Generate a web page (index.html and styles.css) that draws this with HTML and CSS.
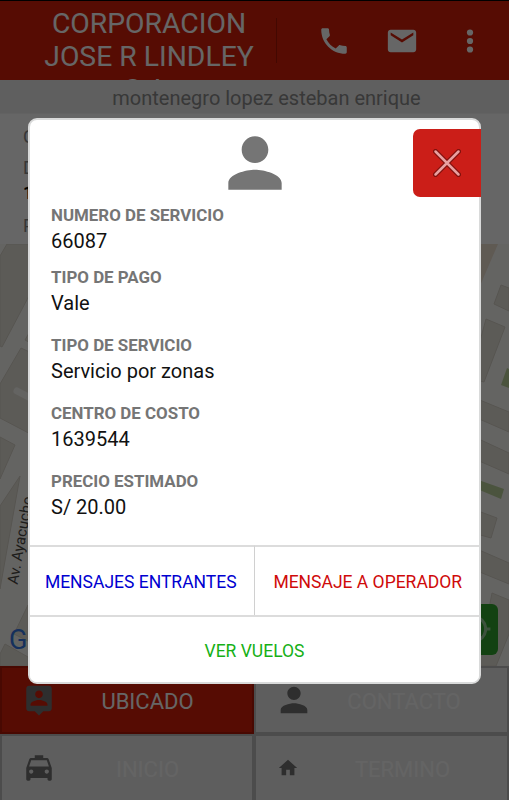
FILE: index.html
```html
<!DOCTYPE html>
<html lang="es">
  <head>
    <meta charset="UTF-8" />
    <meta name="viewport" content="width=device-width, initial-scale=1.0" />
    <title>Servicio</title>
    <link rel="stylesheet" href="styles.css">
  </head>
  <body>
    <div class="screen">
      <header class="header">
        <h1 class="title">CORPORACION<br />JOSE R LINDLEY<br />S.A.</h1>
        <nav class="actions">
          <svg width="34" height="34" viewBox="0 0 24 24"><path d="M6.62 10.79c1.44 2.83 3.76 5.14 6.59 6.59l2.2-2.2c.27-.27.67-.36 1.02-.24 1.12.37 2.33.57 3.57.57.55 0 1 .45 1 1V20c0 .55-.45 1-1 1C10.61 21 3 13.39 3 4c0-.55.45-1 1-1h3.5c.55 0 1 .45 1 1 0 1.25.2 2.45.57 3.57.11.35.03.74-.25 1.02z"/></svg>
          <svg width="34" height="34" viewBox="0 0 24 24"><path d="M20 4H4c-1.1 0-1.99.9-1.99 2L2 18c0 1.1.9 2 2 2h16c1.1 0 2-.9 2-2V6c0-1.1-.9-2-2-2zm0 4l-8 5-8-5V6l8 5 8-5z"/></svg>
          <svg width="34" height="34" viewBox="0 0 24 24"><circle cx="12" cy="6" r="2.2"/><circle cx="12" cy="12" r="2.2"/><circle cx="12" cy="18" r="2.2"/></svg>
        </nav>
      </header>
      <div class="passenger">montenegro lopez esteban enrique</div>
      <div class="info">
        <p class="info-label">C</p>
        <p class="info-label">D</p>
        <p class="info-value">1</p>
        <p class="info-label">P</p>
      </div>
      <div class="map">
        <svg class="map-tiles" width="509" height="422" viewBox="0 0 509 422">
          <g class="block">
            <path d="M0 12L7 0H40V31L2 103 0 102z"/>
            <path d="M25 96L40 70V104z"/>
            <path d="M0 140L21 104 40 113V195L0 174z"/>
            <path d="M0 193L15 201 0 235z"/>
            <path d="M0 262L20 232 0 345z"/>
            <path d="M14 390L28 361V397z"/>
            <path d="M0 410L5 400 28 413V422H0z"/>
            <path d="M501 41L494 60 509 67V44z"/>
            <path d="M486 75L505 83 484 138 470 134z"/>
            <path d="M470 152L509 168V188L470 171z"/>
            <path d="M470 191L509 209V230L470 213z"/>
            <path d="M470 264L497 274 491 294 470 288z"/>
            <path d="M470 302L509 319V340L470 324z"/>
            <path d="M492 349L509 356V390L496 422H478z"/>
          </g>
          <path class="sand" d="M470 0H498L470 65z"/>
          <path class="road" d="M40 159L17 147"/>
          <g class="park">
            <path d="M507 124L501 141 509 144V125z"/>
            <path d="M470 233L504 245 501 255 470 242z"/>
          </g>
          <text class="street" transform="translate(17.500 341) rotate(-80)">Av. Ayacucho</text>
          <text class="google" x="9" y="405">Google</text>
        </svg>
        <div class="locate">
          <svg width="38" height="38" viewBox="0 0 24 24"><path d="M20.940 11A8.990 8.990 0 0 0 13 3.060V1h-2v2.060A8.990 8.990 0 0 0 3.060 11H1v2h2.060A8.990 8.990 0 0 0 11 20.940V23h2v-2.060A8.990 8.990 0 0 0 20.940 13H23v-2zM12 19a7 7 0 1 1 0-14 7 7 0 0 1 0 14z"/></svg>
        </div>
      </div>
      <div class="tabs">
        <div class="tab active">
          <svg width="34" height="34" viewBox="0 0 24 24"><path d="M19 2H5c-1.110 0-2 .9-2 2v14c0 1.100.890 2 2 2h4l3 3 3-3h4c1.100 0 2-.9 2-2V4c0-1.100-.9-2-2-2zm-7 3.300c1.490 0 2.700 1.210 2.700 2.700s-1.210 2.700-2.700 2.700S9.300 9.490 9.300 8s1.210-2.700 2.700-2.700zM18 16H6v-.9c0-2 4-3.100 6-3.100s6 1.100 6 3.100z"/></svg>
          <span class="tab-text">UBICADO</span>
        </div>
        <div class="tab">
          <svg width="40" height="40" viewBox="0 0 24 24"><path d="M12 12c2.210 0 4-1.790 4-4s-1.790-4-4-4-4 1.790-4 4 1.790 4 4 4zm0 2c-2.670 0-8 1.340-8 4v2h16v-2c0-2.660-5.330-4-8-4z"/></svg>
          <span class="tab-text">CONTACTO</span>
        </div>
        <div class="tab">
          <svg width="34" height="34" viewBox="0 0 24 24"><path d="M18.920 6.010C18.720 5.420 18.160 5 17.500 5H15V3H9v2H6.500c-.66 0-1.210.42-1.420 1.010L3 12v8c0 .55.450 1 1 1h1c.55 0 1-.45 1-1v-1h12v1c0 .55.450 1 1 1h1c.55 0 1-.45 1-1v-8zM6.500 16c-.83 0-1.500-.67-1.500-1.500S5.670 13 6.500 13s1.500.67 1.500 1.500S7.330 16 6.500 16zm11 0c-.83 0-1.500-.67-1.500-1.500s.67-1.500 1.500-1.500 1.500.67 1.500 1.500-.67 1.500-1.500 1.500zM5 11l1.500-4.500h11L19 11z"/></svg>
          <span class="tab-text">INICIO</span>
        </div>
        <div class="tab">
          <svg class="home" width="22" height="22" viewBox="0 0 24 24"><path d="M10 20v-6h4v6h5v-8h3L12 3 2 12h3v8z"/></svg>
          <span class="tab-text">TERMINO</span>
        </div>
      </div>
    </div>

    <div class="overlay">
      <div class="modal">
        <button class="close">
          <svg width="28" height="28" viewBox="0 0 28 28"><path class="cross-edge" d="M2.500 2.500L25.500 25.500M25.500 2.500L2.500 25.500"/><path class="cross" d="M2.500 2.500L25.500 25.500M25.500 2.500L2.500 25.500"/></svg>
        </button>
        <div class="modal-body">
          <svg class="avatar" width="80" height="80" viewBox="0 0 24 24"><path d="M12 12c2.210 0 4-1.790 4-4s-1.790-4-4-4-4 1.790-4 4 1.790 4 4 4zm0 2c-2.670 0-8 1.340-8 4v2h16v-2c0-2.660-5.330-4-8-4z"/></svg>
          <dl class="details">
            <dt>NUMERO DE SERVICIO</dt>
            <dd class="tight">66087</dd>
            <dt>TIPO DE PAGO</dt>
            <dd>Vale</dd>
            <dt>TIPO DE SERVICIO</dt>
            <dd>Servicio por zonas</dd>
            <dt>CENTRO DE COSTO</dt>
            <dd>1639544</dd>
            <dt>PRECIO ESTIMADO</dt>
            <dd>S/ 20.00</dd>
          </dl>
        </div>
        <div class="buttons">
          <button class="button blue">MENSAJES ENTRANTES</button>
          <button class="button red">MENSAJE A OPERADOR</button>
          <button class="button green">VER VUELOS</button>
        </div>
      </div>
    </div>
  </body>
</html>
```

FILE: styles.css
```css
* {
  box-sizing: border-box;
}

body {
  font-family: Roboto, "Liberation Sans", sans-serif;
  margin: 0;
  height: 800px;
  overflow: hidden;
}

svg {
  display: block;
  flex-shrink: 0;
}

.screen {
  display: flex;
  flex-direction: column;
  height: 800px;
  background-color: #fff;
}

.header {
  display: flex;
  height: 80px;
  border-top: 1px solid #000;
  background-color: #d81e08;
  overflow: hidden;
}

.title {
  width: 254px;
  margin: 7.2px 0 0 22px;
  color: #fff;
  font-size: 28.3px;
  font-weight: 400;
  line-height: 32.7px;
  text-align: center;
}

.actions {
  display: flex;
  height: 45px;
  margin-top: 17px;
  padding-left: 40px;
  gap: 34px;
  align-items: center;
  border-left: 1px solid #a81404;
  fill: #fff;
}

.passenger {
  height: 33px;
  padding-left: 24px;
  background-color: #eee;
  color: #8c8c8c;
  font-size: 20px;
  line-height: 36px;
  text-align: center;
}

.info {
  height: 131px;
  padding: 13px 23px 0;
  border-top: 1px solid #f4f4f4;
  font-size: 18px;
}

.info p {
  margin: 0;
}

.info-label {
  height: 31px;
  line-height: 20px;
  color: #888;
}

.info-value {
  height: 27px;
  line-height: 8px;
  font-weight: 700;
}

.map {
  position: relative;
  height: 422px;
  background-color: #faf9f6;
  overflow: hidden;
}

.block {
  fill: #e7e4da;
  stroke: #d8d4c9;
}

.sand {
  fill: #ede0cf;
}

.road {
  fill: none;
  stroke: #faf9f6;
  stroke-width: 7;
  stroke-linecap: round;
}

.park {
  fill: #bcd39c;
}

.street {
  fill: #4c4944;
  font-size: 15px;
}

.google {
  fill: #3678e5;
  font-size: 27px;
}

/* sits on the map, partly under the dialog */
.locate {
  position: absolute;
  top: 360px;
  right: 11px;
  width: 51px;
  height: 51px;
  padding: 6px 7px;
  border-radius: 6px;
  background-color: #30a62d;
  fill: #9c9;
}

.tabs {
  display: grid;
  grid-template-columns: 254px 255px;
  grid-template-rows: 68px 66px;
  background-color: #bfbfbf;
}

.tab {
  display: flex;
  align-items: center;
  padding-left: 20px;
  border: 2px solid #bfbfbf;
  background-color: #ebebeb;
  color: #fbfbfb;
  font-size: 22px;
  fill: #737373;
}

.tab:nth-child(even) {
  padding-left: 18px;
}

.tab:nth-child(n + 3) {
  border-bottom: 0;
}

.tab.active {
  border-color: #b51706;
  background-color: #d81e08;
  color: #fff;
}

.tab-text {
  flex: 1;
  padding-top: 2px;
  padding-right: 13px;
  text-align: center;
}

.home {
  margin: 0 12px 0 3px;
}

.overlay {
  position: absolute;
  top: 0;
  left: 0;
  width: 509px;
  height: 800px;
  padding: 118px 28px;
  background-color: rgba(0, 0, 0, 0.6);
}

.modal {
  position: relative;
  display: flex;
  flex-direction: column;
  height: 566px;
  border: 2px solid #d9dada;
  border-radius: 9px;
  background-color: #fff;
}

.close {
  position: absolute;
  top: 9px;
  right: -2px;
  display: flex;
  align-items: center;
  justify-content: center;
  width: 68px;
  height: 68px;
  padding: 0;
  border: 0;
  border-radius: 7px 0 0 7px;
  background-color: #cb1e18;
}

.cross,
.cross-edge {
  stroke: #e8a0a0;
  stroke-width: 2.5;
  stroke-linecap: round;
}

.cross-edge {
  stroke: #80100d;
  stroke-width: 5;
}

.modal-body {
  height: 425px;
  padding: 3px 21px 0;
}

.avatar {
  margin: 0 auto;
  fill: #757575;
}

.details {
  margin: -1px 0 0;
}

.details dt {
  color: #757575;
  font-size: 16.9px;
  font-weight: 700;
  line-height: 26px;
}

.details dd {
  margin: 0 0 16px;
  color: #111;
  font-size: 20px;
  line-height: 26px;
}

.details .tight {
  margin-bottom: 10px;
}

.buttons {
  display: grid;
  grid-template-columns: 1fr 1fr;
  grid-template-rows: 70px 1fr;
  flex: 1;
}

.button {
  padding: 2px 0 0;
  border: 0;
  border-top: 2px solid #dcdcdc;
  background-color: #fff;
  font-family: inherit;
  font-size: 17.5px;
}

.blue {
  padding-right: 2px;
  border-right: 1px solid #d0d0d0;
  color: #0000d0;
}

.red {
  padding-left: 2px;
  color: #cf0a0a;
}

.green {
  grid-column: span 2;
  border-radius: 0 0 7px 7px;
  color: #16b016;
}
```
